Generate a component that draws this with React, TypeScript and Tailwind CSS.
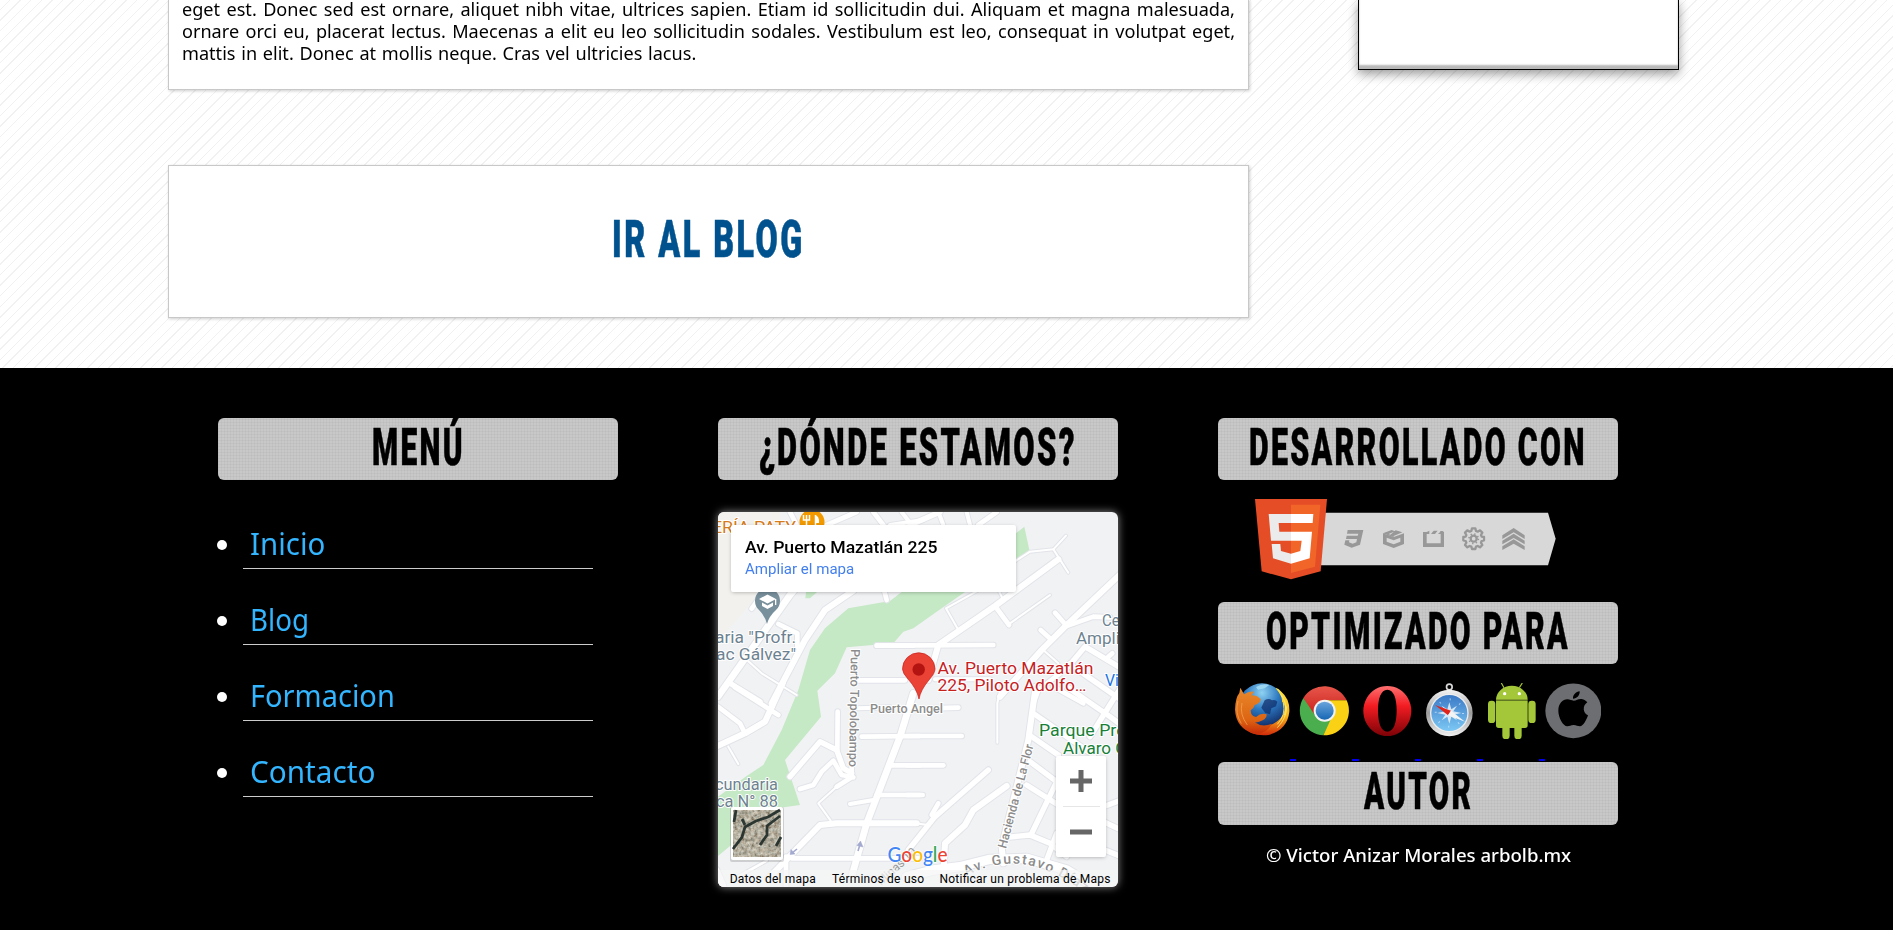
import { useLayoutEffect, useRef, useState, type ReactNode } from "react";

function FitText({ width, className = "", children }: { width: number; className?: string; children: ReactNode }) {
  const ref = useRef<HTMLSpanElement>(null);
  const [scale, setScale] = useState(1);
  useLayoutEffect(() => {
    if (ref.current) setScale(width / ref.current.offsetWidth);
  }, [width]);
  return (
    <span className="inline-block whitespace-nowrap text-left align-top" style={{ width }}>
      <span ref={ref} className={"inline-block origin-left align-top " + className} style={{ transform: `scaleX(${scale})` }}>
        {children}
      </span>
    </span>
  );
}

const display = "font-['Roboto',sans-serif] font-black text-[52px] leading-[60px] tracking-[4px] -mr-[4px] [-webkit-text-stroke:0.6px_currentColor]";
const body = "font-['Noto_Sans',sans-serif]";

function Heading({ width, tall, children }: { width: number; tall?: boolean; children: string }) {
  return (
    <h2
      className={
        "w-[400px] rounded-[6px] bg-[#c8c8c8] bg-[repeating-linear-gradient(0deg,rgba(0,0,0,.03)_0_1px,transparent_1px_3px),repeating-linear-gradient(90deg,rgba(0,0,0,.03)_0_1px,transparent_1px_3px)] text-center text-black " +
        (tall ? "h-[63px]" : "h-[62px]")
      }
    >
      <FitText width={width} className={display}>
        {children}
      </FitText>
    </h2>
  );
}

function Paragraph() {
  const last = useRef<HTMLSpanElement>(null);
  const [scale, setScale] = useState(1);
  useLayoutEffect(() => {
    if (last.current) setScale(514 / last.current.offsetWidth);
  }, []);
  return (
    <div
      className={body + " origin-left whitespace-nowrap text-[18px] leading-[22px] text-black [word-spacing:1px]"}
      style={{ width: 1053 / scale, transform: `scaleX(${scale})` }}
    >
      <div className="[text-align-last:justify]">
        eget est. Donec sed est ornare, aliquet nibh vitae, ultrices sapien. Etiam id sollicitudin dui. Aliquam et magna malesuada,
      </div>
      <div className="[text-align-last:justify]">
        ornare orci eu, placerat lectus. Maecenas a elit eu leo sollicitudin sodales. Vestibulum est leo, consequat in volutpat eget,
      </div>
      <div>
        <span ref={last} className="inline-block">
          mattis in elit. Donec at mollis neque. Cras vel ultricies lacus.
        </span>
      </div>
    </div>
  );
}

type Road = [string, number];
const quadrants: { t: string; roads: Road[] }[] = [
  {
    t: "translate(-8 -12) scale(.33333)",
    roads: [
      ["M24,590 L240,285 L300,215", 22],
      ["M185,610 L285,420 L345,330 L430,272", 20],
      ["M125,326 L165,270", 16],
      ["M205,372 L262,400 L262,440", 16],
      ["M500,437 L610,437", 16],
      ["M445,541 L585,541", 16],
      ["M60,550 L150,605", 18],
      ["M105,475 L155,520 L260,585", 8],
      ["M530,300 L520,262", 16],
      ["M240,36 L260,75", 16],
      ["M350,75 L440,36", 16],
      ["M490,36 L520,75", 16],
      ["M575,36 L605,75", 14],
      ["M540,75 L640,60", 14],
    ],
  },
  {
    t: "translate(192 -12) scale(.33333)",
    roads: [
      ["M55,540 L85,435 L255,318 L445,178", 20],
      ["M-100,437 L250,435", 16],
      ["M255,318 L297,375", 16],
      ["M300,370 L420,285", 8],
      ["M145,390 L125,355 L108,325 L270,235 L318,182 L360,155 L430,148 L468,107", 8],
      ["M430,148 L475,218", 8],
      ["M265,270 L280,300", 8],
      ["M634,220 L465,380 L395,450 L270,590", 20],
      ["M465,380 L550,350 L600,352", 16],
      ["M435,338 L465,372", 16],
      ["M392,390 L425,420", 16],
      ["M400,450 L445,490", 8],
      ["M475,500 L525,440 L634,505", 18],
      ["M590,475 L607,460", 16],
      ["M370,610 L385,570 L450,520 L480,490", 16],
      ["M430,560 L520,610", 16],
      ["M490,500 L634,600", 18],
      ["M0,75 L90,36", 18],
      ["M85,36 L100,75", 14],
      ["M170,36 L180,75", 14],
      ["M205,75 L260,36", 16],
      ["M75,538 L240,538", 14],
    ],
  },
  {
    t: "translate(-8 178) scale(.33333)",
    roads: [
      ["M75,-8 L205,75", 16],
      ["M24,50 L90,100 L105,130", 16],
      ["M218,-20 L165,95 L105,130 L14,172", 20],
      ["M55,170 L85,222", 8],
      ["M240,260 L330,155 L380,180 L400,235 L425,250", 18],
      ["M383,65 L382,180", 16],
      ["M270,297 L310,285 L335,245 L370,212 L395,255 L430,262", 16],
      ["M425,225 L425,262 L380,290", 16],
      ["M380,290 L325,340 L362,392", 8],
      ["M455,140 L630,138", 16],
      ["M540,226 L630,226", 16],
      ["M500,315 L630,315", 16],
      ["M420,342 L490,330", 14],
      ["M610,10 L570,140 L470,400 L425,560", 22],
      ["M175,565 L330,405 L380,400 L620,400", 20],
      ["M245,505 L630,505", 16],
      ["M228,500 V590", 16],
      ["M18,540 L38,585", 22],
      ["M75,565 L170,512", 10],
      ["M445,55 L540,52", 14],
    ],
  },
  {
    t: "translate(192 178) scale(.33333)",
    roads: [
      ["M60,55 L145,53", 16],
      ["M-10,138 L155,138", 16],
      ["M-10,226 L100,226", 16],
      ["M-10,315 L38,315", 16],
      ["M-5,480 L75,380 L235,240", 18],
      ["M65,375 L85,340", 16],
      ["M15,400 L55,405", 8],
      ["M100,550 L105,460 L165,405 L190,360 L290,288", 20],
      ["M275,-20 L262,40 L262,158", 8],
      ["M377,-10 L355,150 L275,470 L280,520", 20],
      ["M370,70 L550,195", 18],
      ["M365,140 L445,195", 18],
      ["M360,215 L440,275", 18],
      ["M350,285 L445,345", 18],
      ["M365,430 L445,265", 18],
      ["M290,442 L360,435 L420,460 L470,500", 18],
      ["M410,510 L440,430", 18],
      ["M470,-10 L600,80 L640,110", 18],
      ["M634,-10 L540,140", 18],
      ["M-10,560 L70,540 L150,530 L240,508 L350,505 L470,540 L570,600", 30],
      ["M580,350 L634,330", 18],
      ["M580,395 L634,420", 18],
      ["M560,470 L634,500", 18],
    ],
  },
];

function Label({ x, y, w, size, fill, children, transform, weight = 400 }: { x: number; y: number; w: number; size: number; fill: string; children: string; transform?: string; weight?: number }) {
  return (
    <text x={x} y={y} transform={transform} textLength={w} lengthAdjust="spacingAndGlyphs" fontSize={size} fontWeight={weight} fill={fill} stroke="#fff" strokeWidth="2" strokeLinejoin="round" paintOrder="stroke">
      {children}
    </text>
  );
}

function MapCanvas() {
  return (
    <svg width="400" height="375" viewBox="0 0 400 375" className="block font-['Roboto',sans-serif] font-normal">
      <defs>
        <filter id="terrain" x="0" y="0" width="1" height="1">
          <feTurbulence type="fractalNoise" baseFrequency=".3" numOctaves="3" seed="4" />
          <feColorMatrix values=".7 .4 0 0 -.1  .6 .5 0 0 -.13  .5 .5 0 0 -.16  0 0 0 0 1" />
        </filter>
      </defs>
      <rect width="400" height="375" fill="#f1f2f4" />
      <path d="M0,0 H62 V60 L30,95 L0,130Z" fill="#f3f1ee" />
      <g transform="translate(-8 -12) scale(.33333)" fill="#c5e8c5">
        <path d="M415,325 L540,303 L580,272 L640,240 L765,276 L680,335 L610,385 L580,395 L550,430 L410,442 L375,520 L322,572 L333,650 L225,780 L270,915 L200,925 L130,980 L24,1068 V890 L110,828 L160,795 L215,690 L265,570 L300,450 L345,385Z" />
        <path d="M288,275 h34 l-22,20 h-14z" />
        <path d="M918,100 L943,80 L958,150 L918,180Z" />
      </g>
      {[0, 1].map((layer) =>
        quadrants.map((q) => (
          <g key={q.t + layer} transform={q.t} fill="none" strokeLinecap="round" strokeLinejoin="round" stroke={layer ? "#ffffff" : "#e2e4e9"}>
            {q.roads.map(([d, w]) => (
              <path key={d} d={d} strokeWidth={layer ? w - 2 : w + 4} />
            ))}
          </g>
        )),
      )}
      <g fill="#a3a9cf" stroke="#a3a9cf" strokeWidth="1.600">
        <path d="M79,337 L74,341" />
        <path d="M72,342.500 L73,337.500 L77,342Z" strokeWidth=".5" />
        <path d="M140,339 L141.500,334" />
        <path d="M142.500,329 L139,333.500 L145,335Z" strokeWidth=".5" />
      </g>

      <Label x={-6} y={21} w={84} size={16} fill="#d57c1c">ERÍA PATY</Label>
      <circle cx="94" cy="10" r="12.500" fill="#f29900" />
      <path d="M88.500,3 V15 M85.500,3 V8 H91.500 V3 M97.500,16 V3" fill="none" stroke="#fff" strokeWidth="1.500" />
      <path d="M97,3 q4.500,1 4,8 h-4z" fill="#fff" />

      <path d="M49,112 Q47,104 41,98 A12.500,12.500 0 1 1 58,98 Q51,104 49,112Z" fill="#78909c" />
      <path d="M41,87 L49.500,82.500 L58,87 L49.500,91.500Z M44,90.500 V94 L49.500,97 L55,94 V90.500 L49.500,93.500Z M57,87 h1.300 v6 h-1.300z" fill="#fff" />
      <Label x={-3} y={131} w={81} size={16} fill="#6d8290">{'aria "Profr.'}</Label>
      <Label x={-2} y={148} w={80} size={16} fill="#6d8290">{'ac Gálvez"'}</Label>

      <Label x={0} y={0} w={118} size={12.5} weight={500} fill="#8c8c8c" transform="translate(133 137) rotate(91)">Puerto Topolobampo</Label>
      <Label x={152} y={200.5} w={73} size={12} weight={500} fill="#8c8c8c">Puerto Angel</Label>
      <Label x={0} y={0} w={107} size={12.5} weight={500} fill="#8c8c8c" transform="translate(288 337) rotate(-75)">Hacienda de La Flor</Label>

      <Label x={384} y={114} w={26} size={16} fill="#6d8290">Cen</Label>
      <Label x={358} y={132} w={62} size={16} fill="#6d8290">Ampliac</Label>
      <Label x={387} y={174} w={30} size={16} fill="#1a73e8">Villa</Label>
      <Label x={219.5} y={161.5} w={156} size={16} fill="#c5221f">Av. Puerto Mazatlán</Label>
      <Label x={219.5} y={179} w={149} size={16} fill="#c5221f">225, Piloto Adolfo…</Label>
      <Label x={321} y={224} w={100} size={16} fill="#188038">Parque Presi</Label>
      <Label x={345} y={241.5} w={64} size={16} fill="#188038">Alvaro O</Label>
      <Label x={-3} y={278} w={63} size={16} fill="#6d8290">cundaria</Label>
      <Label x={-2} y={295} w={62} size={16} fill="#6d8290">ca N° 88</Label>

      <path d="M201,187 Q199,177 190,167 Q184.500,161 184.500,157 A16.200,16.200 0 0 1 217,157 Q217,161 211,168 Q202.500,178 201,187Z" fill="#ea4335" stroke="#c5221f" strokeWidth=".7" />
      <circle cx="200.700" cy="157.500" r="6.200" fill="#b31412" />

      <path id="gustavo" d="M248,364 Q285,345 318,355 T375,388" fill="none" />
      <text fontSize="14" fontWeight="500" fill="#8c8c8c" stroke="#fff" strokeWidth="2" paintOrder="stroke" letterSpacing="1.500">
        <textPath href="#gustavo">Av. Gustavo Díaz</textPath>
      </text>
      <text transform="translate(163 374) rotate(-42)" fontSize="12" fill="#9a9a9a">Minas 10</text>

      <text x="169.500" y="349.500" textLength="60" lengthAdjust="spacingAndGlyphs" fontSize="20.500" className="font-['Lato',sans-serif]" stroke="#fff" strokeWidth="1.500" paintOrder="stroke" fontWeight="500">
        <tspan fill="#4285f4">G</tspan>
        <tspan fill="#ea4335">o</tspan>
        <tspan fill="#fbbc04">o</tspan>
        <tspan fill="#4285f4">g</tspan>
        <tspan fill="#34a853">l</tspan>
        <tspan fill="#ea4335">e</tspan>
      </text>

      <rect x="0" y="358" width="400" height="17" fill="#f5f5f5" opacity=".72" />
      <g fontSize="12" fill="#000">
        <text x="11.700" y="370.800" textLength="86">Datos del mapa</text>
        <text x="114" y="370.800" textLength="92">Términos de uso</text>
        <text x="221.500" y="370.800" textLength="171">Notificar un problema de Maps</text>
      </g>

      <g>
        <rect x="12" y="295" width="54" height="55" rx="2" fill="#000" opacity=".15" />
        <rect x="13" y="295" width="52" height="53" rx="2" fill="#fff" />
        <rect x="15" y="298" width="48" height="47" filter="url(#terrain)" />
        <path d="M15,337 L24,325 L27,315 L38,309 L50,305 L62,298 M27,313 L24,307 M42,333 L49,323 L49,314 L62,304 M58,334 L63,325 M18,298 L16,310" fill="none" stroke="#1d2926" strokeWidth="2.800" opacity=".9" />
      </g>
    </svg>
  );
}

function MapWidget() {
  return (
    <div className="relative mt-8 h-[375px] w-[400px] overflow-hidden rounded-[6px] shadow-[0_0_8px_rgba(255,255,255,.55)]">
      <MapCanvas />
      <div className="absolute left-[13px] top-[13px] flex h-[67px] w-[285px] flex-col rounded-[2px] bg-white pl-[14px] pt-[13px] font-['Roboto',sans-serif] leading-5 shadow-[0_1px_4px_-1px_rgba(0,0,0,.35)]">
        <FitText width={192} className="text-[16.5px] leading-5 font-medium text-black">Av. Puerto Mazatlán 225</FitText>
        <a className="mt-[2px] text-[#427fed]">
          <FitText width={109} className="text-[14.5px] leading-5">Ampliar el mapa</FitText>
        </a>
      </div>
      <div className="absolute left-[338px] top-[244px] flex h-[101px] w-[50px] flex-col items-center rounded-[2px] bg-white shadow-[0_1px_4px_-1px_rgba(0,0,0,.35)]">
        <svg width="50" height="50" viewBox="0 0 50 50">
          <path d="M14,25 H36 M25,14 V36" stroke="#666" strokeWidth="5" />
        </svg>
        <div className="h-px w-[37px] shrink-0 bg-[#e6e6e6]" />
        <svg width="50" height="50" viewBox="0 0 50 50">
          <path d="M14,25 H36" stroke="#666" strokeWidth="5" />
        </svg>
      </div>
    </div>
  );
}

function Html5Badge() {
  return (
    <svg width="302" height="81" viewBox="135 297 906 243" className="block">
      <path d="M325,338 H1014 L1037,416 L1014,496 H325Z" fill="#d8d8d8" />
      <path d="M135,297 H351 L332,514 L243,538 L155,514Z" fill="#e44d26" />
      <path d="M243,314 H331 L315,500 L243,519Z" fill="#f16529" />
      <path d="M243,342 H176 L183,422 H243 V395 H208 L206,369 H243Z M243,461 L213,453 L211,432 H185 L189,475 L243,491Z" fill="#ebebeb" />
      <path d="M243,342 H310 L308,369 H243Z M243,395 H306 L299,475 L243,491 V461 L271,453 L275,422 H243Z" fill="#fff" />
      <g fill="#989898">
        <path d="M413,390 H460 L450,434 L425,443 L403,434 L406,421 H418 L417,427 L428,431 L439,427 L441,417 H408 L410,407 H443 L445,401 H411Z" />
        <path d="M519,400 L551,411 L582,400 V432 L551,444 L519,432Z M530,413 V425 L551,433 L571,425 V413 L551,421Z" fillRule="evenodd" />
        <path d="M519,400 L545,390 L555,394 L536,402 L551,408 L551,412Z M557,391 L577,397 L551,408 L541,404Z" />
        <path d="M639,396 H650 L658,392 V402 H650 V430 H692 V402 H684 L691,395 H702 V441 H639Z M663,402 L671,392 H683 L675,402Z M690,393 h10 l-6,7z" />
        <path d="M877,406 L911,384 L944,406 V417 L911,397 L877,417Z M877,422 L911,401 L944,422 V433 L911,414 L877,433Z M877,439 L911,418 L944,439 V450 L911,431 L877,450Z" />
      </g>
      <g transform="translate(791 416)" stroke="#989898" fill="none">
        <path
          d="M-5,-31 H5 L7,-23 L12,-21 L19,-25 L26,-18 L22,-11 L24,-6 L31,-5 V5 L24,7 L22,12 L26,19 L19,26 L12,22 L7,24 L5,31 H-5 L-7,24 L-12,22 L-19,26 L-26,19 L-22,12 L-24,7 L-31,5 V-5 L-24,-6 L-22,-11 L-26,-18 L-19,-25 L-12,-21 L-7,-23Z"
          strokeWidth="7"
          strokeLinejoin="round"
        />
        <circle r="9" strokeWidth="7" />
        <circle r="14" strokeWidth="5" strokeDasharray="4 7" />
      </g>
    </svg>
  );
}

function Defs() {
  return (
    <defs>
      <radialGradient id="globe" cx=".5" cy=".2" r=".8">
        <stop offset="0" stopColor="#8fd2f2" />
        <stop offset=".45" stopColor="#2c78c0" />
        <stop offset="1" stopColor="#0c1c55" />
      </radialGradient>
      <linearGradient id="tail" x1="0" y1="0" x2="0" y2="1">
        <stop offset="0" stopColor="#ffe94a" />
        <stop offset=".6" stopColor="#f9b31c" />
        <stop offset="1" stopColor="#cf2a0a" />
      </linearGradient>
      <linearGradient id="fur" x1="0" y1="0" x2="0" y2="1">
        <stop offset="0" stopColor="#e88a2c" />
        <stop offset=".7" stopColor="#dd6412" />
        <stop offset="1" stopColor="#c52c08" />
      </linearGradient>
      <linearGradient id="chromeRed" x1="0" y1="0" x2="0" y2="1">
        <stop offset="0" stopColor="#e8564a" />
        <stop offset="1" stopColor="#c8201c" />
      </linearGradient>
      <linearGradient id="chromeBlue" x1="0" y1="0" x2="0" y2="1">
        <stop offset="0" stopColor="#6aa4dc" />
        <stop offset="1" stopColor="#1767b4" />
      </linearGradient>
      <linearGradient id="operaRed" x1="0" y1="0" x2="0" y2="1">
        <stop offset="0" stopColor="#ff7070" />
        <stop offset=".4" stopColor="#f21c22" />
        <stop offset="1" stopColor="#7c0206" />
      </linearGradient>
      <linearGradient id="steel" x1="0" y1="0" x2="0" y2="1">
        <stop offset="0" stopColor="#f5f5f5" />
        <stop offset=".5" stopColor="#9c9c9c" />
        <stop offset="1" stopColor="#f2f2f2" />
      </linearGradient>
      <linearGradient id="dial" x1="0" y1="0" x2="0" y2="1">
        <stop offset="0" stopColor="#3b79c6" />
        <stop offset="1" stopColor="#7cc8f4" />
      </linearGradient>
    </defs>
  );
}

const icons: { name: string; art: ReactNode }[] = [
  {
    name: "Firefox",
    art: (
      <g>
        <Defs />
        <circle cx="84" cy="72" r="71" fill="url(#globe)" />
        <path d="M92,52 q12,-8 22,0 q10,-4 16,4 l-4,14 l-14,6 l-4,18 l-14,-4 l-12,-16z" fill="#12306e" opacity=".75" />
        <path d="M66,12 q20,-12 40,-6 l-14,10 l-20,4z" fill="#a8e0f6" opacity=".8" />
        <path d="M124,14 Q134,16 142,26 Q168,48 166,86 Q160,140 104,156 Q50,162 22,126 Q60,146 104,128 Q150,112 152,76 Q152,62 144,56 Q146,40 124,14Z" fill="url(#tail)" />
        <path d="M140,34 Q162,60 152,96 M148,60 Q156,96 130,124 M158,70 Q158,106 130,134" stroke="#fff27a" strokeWidth="3" fill="none" opacity=".8" />
        <path d="M19,14 L30,34 Q44,24 60,26 L52,38 Q66,34 80,48 Q80,60 62,66 Q60,76 50,82 Q50,100 66,102 Q82,88 98,94 Q98,106 86,112 Q72,120 62,118 Q84,134 114,122 Q96,156 60,152 Q6,136 3,80 Q4,44 16,30Z" fill="url(#fur)" />
        <path d="M12,54 Q2,90 22,122 M24,60 Q16,94 40,126" stroke="#f7b267" strokeWidth="3" fill="none" opacity=".6" />
      </g>
    ),
  },
  {
    name: "Chrome",
    art: (
      <g>
        <path d="M22,45 A74,74 0 0 1 152,52 L86,52 L50,98Z" fill="url(#chromeRed)" />
        <path d="M22,45 A74,74 0 0 0 82,157 L113,98 L58,98Z" fill="#4aad4e" />
        <path d="M152,52 A74,74 0 0 1 82,157 L116,84 L86,52Z" fill="#fbd116" />
        <circle cx="86" cy="83" r="33" fill="#f2f2f2" />
        <circle cx="86" cy="83" r="27" fill="url(#chromeBlue)" />
      </g>
    ),
  },
  {
    name: "Opera",
    art: <path fillRule="evenodd" fill="url(#operaRed)" d="M85,9 A72,75 0 1 1 84.900,9Z M85,20 C66,20 57,46 57,82 C57,120 66,146 85,146 C104,146 113,120 113,82 C113,46 104,20 85,20Z" />,
  },
  {
    name: "Safari",
    art: (
      <g>
        <circle cx="85" cy="12" r="8.500" fill="none" stroke="#d8d8d8" strokeWidth="5" />
        <circle cx="85" cy="90" r="70" fill="url(#steel)" />
        <circle cx="85" cy="90" r="58" fill="#eee" />
        <circle cx="85" cy="90" r="54" fill="url(#dial)" />
        <path d="M85,58 l6,21 l17,-11 l-11,17 l24,5 l-24,5 l11,17 l-17,-11 l-6,21 l-6,-21 l-17,11 l11,-17 l-24,-5 l24,-5 l-11,-17 l17,11z" fill="#fff" opacity=".75" />
        <circle cx="85" cy="90" r="41" fill="none" stroke="#d8ecfb" strokeWidth="6" strokeDasharray="3 29.200" opacity=".7" />
        <path d="M42,66 L90,83 L81,97Z" fill="#e2231a" />
        <path d="M132,116 L90,83 L81,97Z" fill="#f4f4f4" />
      </g>
    ),
  },
  {
    name: "Android",
    art: (
      <g fill="#a4c639">
        <path d="M55,0 L63,14 M118,0 L109,14" stroke="#a4c639" strokeWidth="3.500" />
        <path d="M39,50 A47,41 0 0 1 134,50Z" />
        <circle cx="65" cy="32" r="5" fill="#fff" />
        <circle cx="109" cy="32" r="5" fill="#fff" />
        <path d="M39,50 H134 V54 H39Z" opacity=".6" />
        <path d="M39,54 H134 V127 Q134,135 126,135 H116 V158 A11,11 0 0 1 94,158 V135 H80 V158 A11,11 0 0 1 58,158 V135 H47 Q39,135 39,127Z" />
        <rect x="15" y="53" width="22" height="67" rx="10" />
        <rect x="136" y="53" width="22" height="67" rx="10" />
      </g>
    ),
  },
  {
    name: "Apple",
    art: (
      <g>
        <ellipse cx="85" cy="83.500" rx="84" ry="82" fill="#6d6e71" />
        <path d="M86,53 C95,53 99,47 110,48 C118,49 123,53 127,58 C112,68 113,90 129,97 C124,112 115,129 105,130 C97,130 95,126 86,126 C77,126 74,130 67,130 C54,129 40,104 40,83 C40,62 53,49 67,49 C75,49 80,53 86,53Z M84,47 C83,36 93,26 104,25 C105,37 96,47 84,47Z" fill="#000" />
      </g>
    ),
  },
];

export default function App() {
  return (
    <div className="flex h-[930px] w-full flex-col overflow-hidden bg-white">
      <main className="flex h-[368px] shrink-0 items-start bg-[repeating-linear-gradient(135deg,transparent_0_6.500px,#f1f1f1_6.500px_7.500px)] pl-[168px]">
        <div className="flex w-[1081px] flex-col">
          <article className="h-[90px] border border-t-0 border-[#c8c8c8] bg-white pl-[13px] shadow-[1px_1px_3px_rgba(0,0,0,.2)]">
            <div className="-mt-[2px]">
              <Paragraph />
            </div>
          </article>
          <section className="mt-[75px] h-[153px] border border-[#c8c8c8] bg-white pt-[44px] text-center shadow-[1px_1px_3px_rgba(0,0,0,.2)]">
            <a className="text-[#00528e]">
              <FitText width={193} className={display}>IR AL BLOG</FitText>
            </a>
          </section>
        </div>
        <aside className="ml-[109px] h-[70px] w-[321px] border border-t-0 border-black bg-white shadow-[0_4px_10px_rgba(0,0,0,.4),inset_0_-4px_2px_#b8b8b8]" />
      </main>

      <footer className="flex h-[562px] gap-[100px] bg-black pl-[218px] pt-[50px]">
        <nav className="w-[400px]">
          <Heading width={93}>MENÚ</Heading>
          <ul className="pt-[12.5px]">
            {[
              ["Inicio", 75],
              ["Blog", 59],
              ["Formacion", 145],
              ["Contacto", 125.5],
            ].map(([label, w]) => (
              <li key={label} className="flex h-[76.2px] items-end">
                <span className="mb-[19px] ml-[-1px] mr-[16px] h-[10px] w-[10px] rounded-full bg-white" />
                <a className="flex h-[55px] w-[350px] border-b border-[#ccc] pl-[6.5px] pt-[8px] text-[#33b5ff]">
                  <FitText width={w as number} className={body + " text-[31px] leading-[42px]"}>{label}</FitText>
                </a>
              </li>
            ))}
          </ul>
        </nav>

        <section className="w-[400px]">
          <Heading width={318}>¿DÓNDE ESTAMOS?</Heading>
          <MapWidget />
        </section>

        <section className="w-[400px]">
          <Heading width={338}>DESARROLLADO CON</Heading>
          <div className="h-[122px] pl-[37px] pt-[19px]">
            <Html5Badge />
          </div>
          <Heading width={304}>OPTIMIZADO PARA</Heading>
          <div className="flex h-[98px] pl-[16px] pt-[19px]">
            {icons.map((icon, i) => (
              <div key={icon.name} className="flex">
                <svg width="56" height="56" viewBox="0 0 168 168" role="img">
                  {icon.art}
                </svg>
                {i < icons.length - 1 && <span className="mt-[76px] h-[2px] w-[6.3px] bg-[#0000ee]" />}
              </div>
            ))}
          </div>
          <Heading width={109} tall>AUTOR</Heading>
          <p className="mt-[14px] text-center text-white">
            <FitText width={305} className={body + " text-[18px] leading-[32px] font-medium"}>
              © Victor Anizar Morales arbolb.mx
            </FitText>
          </p>
        </section>
      </footer>
    </div>
  );
}
